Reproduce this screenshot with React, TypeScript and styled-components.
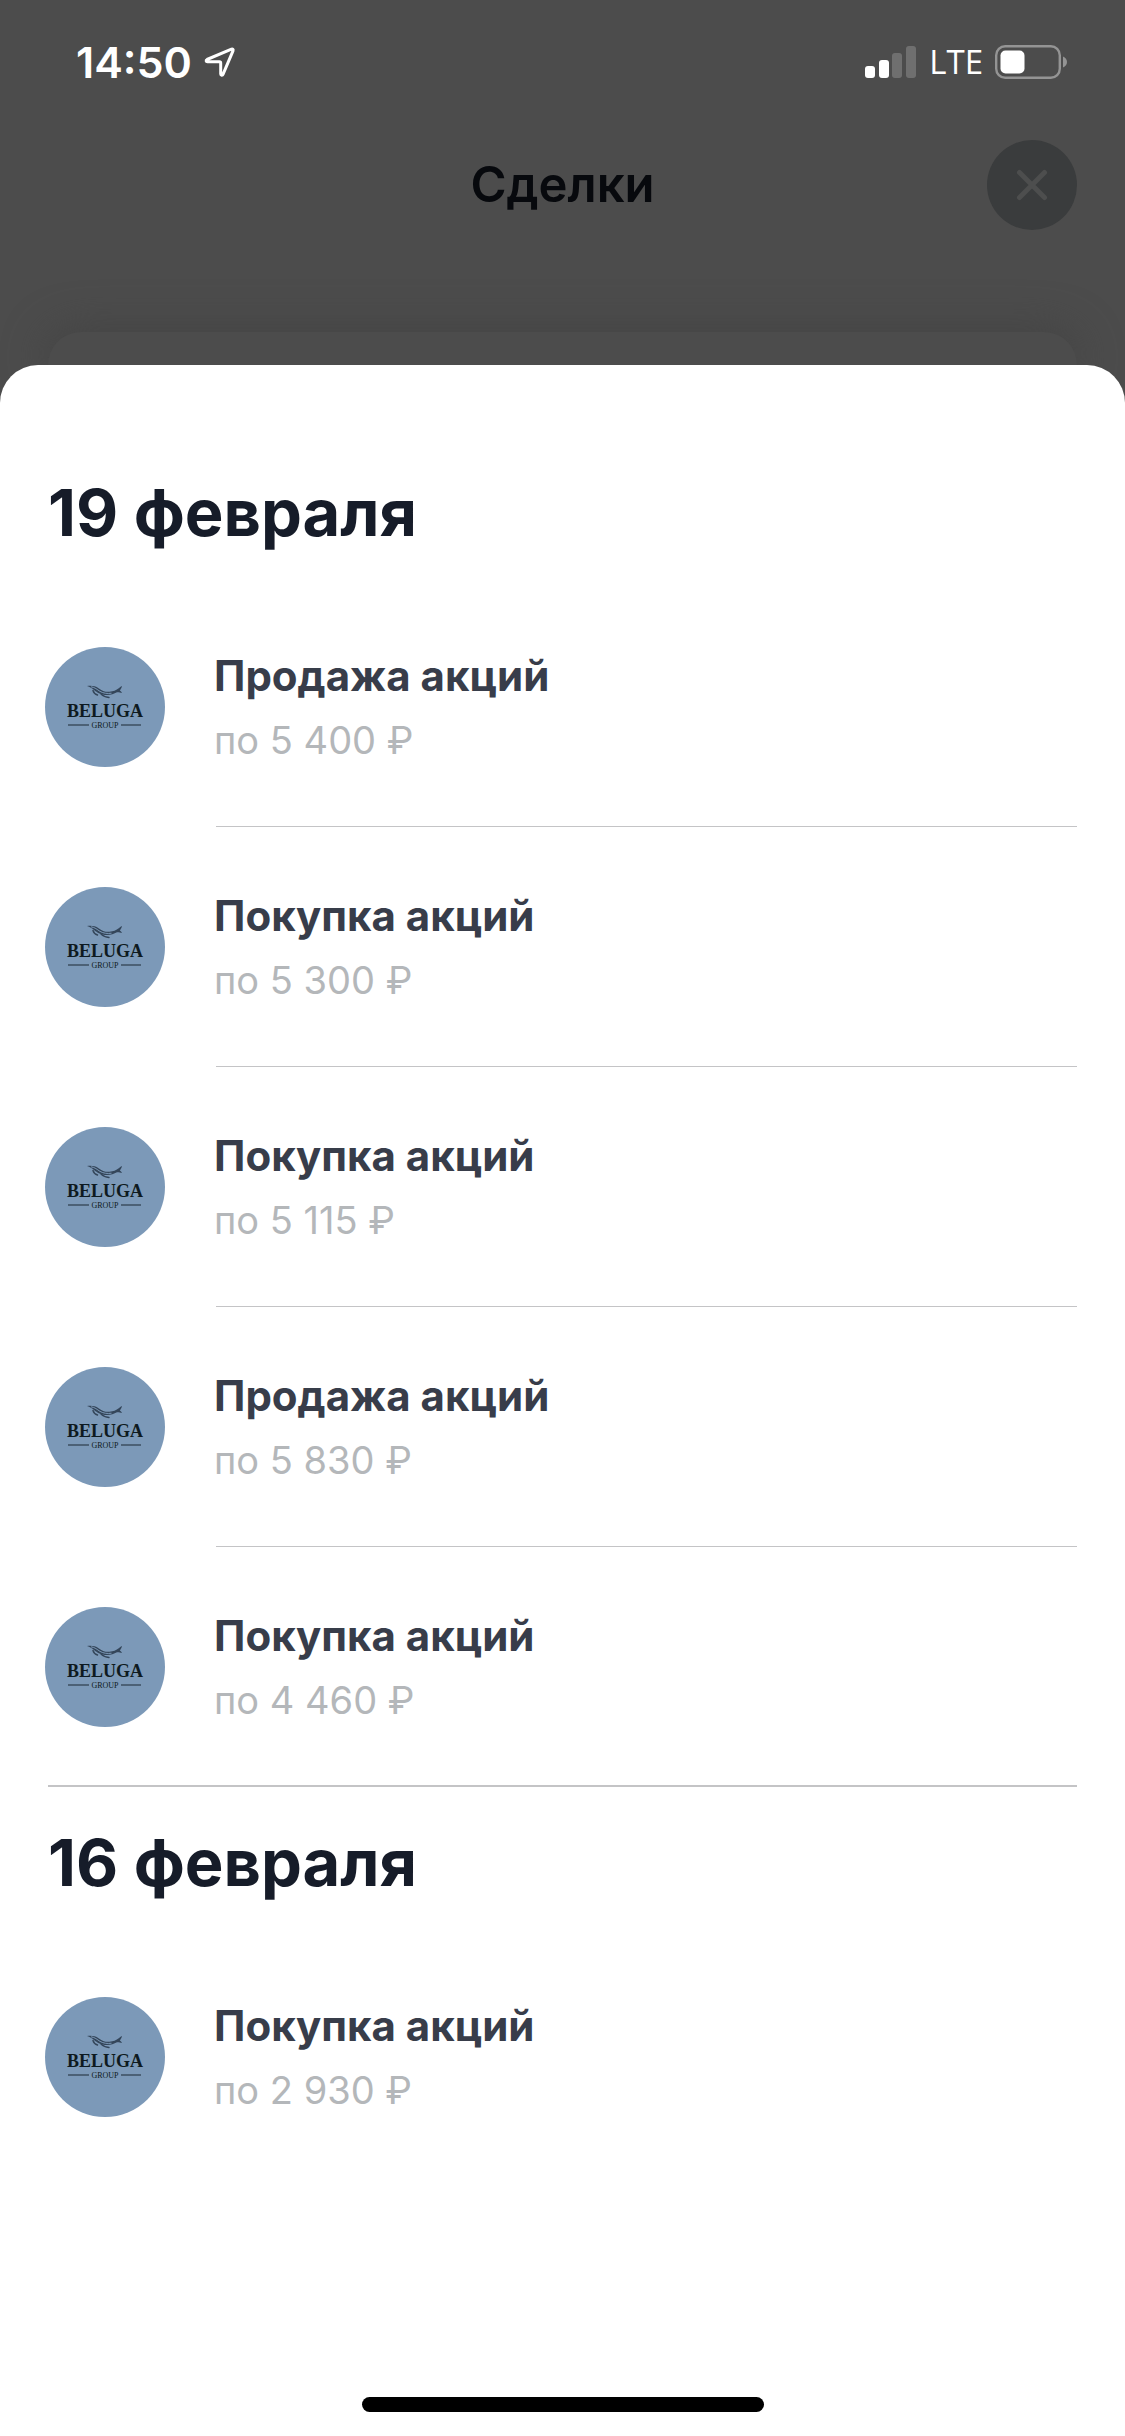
import React from 'react';
import styled, { createGlobalStyle } from 'styled-components';

type Deal = {
  title: string;
  price: string;
};

type DealGroup = {
  date: string;
  deals: Deal[];
};

const groups: DealGroup[] = [
  {
    date: '19 февраля',
    deals: [
      { title: 'Продажа акций', price: 'по 5 400 ₽' },
      { title: 'Покупка акций', price: 'по 5 300 ₽' },
      { title: 'Покупка акций', price: 'по 5 115 ₽' },
      { title: 'Продажа акций', price: 'по 5 830 ₽' },
      { title: 'Покупка акций', price: 'по 4 460 ₽' },
    ],
  },
  {
    date: '16 февраля',
    deals: [{ title: 'Покупка акций', price: 'по 2 930 ₽' }],
  },
];

const LocationIcon: React.FC = () => (
  <svg width="32" height="32" viewBox="0 0 32 32" fill="none" aria-hidden="true">
    <path
      d="M3 13.500 27.500 3.200c1.200-.4 2 .4 1.500 1.600L19 28.400c-.5 1.200-2.300 1-2.300-.3V17c0-.8-.4-1.200-1.200-1.200H3.400c-1.400 0-1.700-1.700-.4-2.300Z"
      stroke="#fff"
      strokeWidth="3"
      strokeLinejoin="round"
    />
  </svg>
);

const SignalIcon: React.FC = () => (
  <svg width="52" height="32" viewBox="0 0 52 32" fill="#fff" aria-hidden="true">
    <rect x="0" y="20" width="10" height="12" rx="3" />
    <rect x="14" y="14" width="10" height="18" rx="3" />
    <rect x="27" y="7" width="10" height="25" rx="3" opacity="0.2" />
    <rect x="41" y="0" width="10" height="32" rx="3" opacity="0.2" />
  </svg>
);

const BatteryIcon: React.FC = () => (
  <svg width="73" height="34" viewBox="0 0 73 34" fill="none" aria-hidden="true">
    <rect x="1.2" y="1.2" width="63.6" height="31.6" rx="9" stroke="#949494" strokeWidth="2.4" />
    <rect x="5.5" y="5.5" width="24" height="23" rx="5" fill="#fff" />
    <path d="M68 11.500c2.500 1 4 3 4 5.500s-1.500 4.500-4 5.500Z" fill="#949494" />
  </svg>
);

const CloseIcon: React.FC = () => (
  <svg width="32" height="32" viewBox="0 0 32 32" fill="none" aria-hidden="true">
    <path d="M3.500 3.500l25 25M28.500 3.500l-25 25" stroke="#4d4e4e" strokeWidth="5" strokeLinecap="round" />
  </svg>
);

const BelugaLogo: React.FC = () => (
  <Logo viewBox="0 0 120 120" role="img" aria-label="Beluga Group">
    <circle cx="60" cy="60" r="60" fill="#7c99b8" />
    <path
      d="M42 39c4.500-.6 8.500 0 11.500 2.200 3.500 2.600 7 4 11 3.600 4-.4 6.500-1.500 8.500-3 1.500-1.200 2.500-2.300 4-2.800-.5 2-1.200 3.300-2.200 4.400 1 .6 1.700 1.300 2.200 2.600-2-.6-3.300-1-5-.8-3 1.600-6 2.800-10 2.800-6 0-10-2.500-13-5-2-1.700-4-3-7-4Z"
      fill="#34465a"
    />
    <path
      d="M46 39.800c4 .6 6 2.700 9 4.600 3.500 2 7.500 2.400 11.500 1.800"
      fill="none"
      stroke="#7c99b8"
      strokeWidth="1"
    />
    <path
      d="M48 43.500c.5 2 1.500 3.500 4.500 4.500M56 47c2 2 4.500 3.200 8 3.500"
      fill="none"
      stroke="#34465a"
      strokeWidth="1.4"
      strokeLinecap="round"
    />
    <text x="60" y="70" textAnchor="middle" fontSize="18" fontWeight="700" fill="#0e1a20">
      BELUGA
    </text>
    <path d="M23 78h21M76 78h20" stroke="#1d2a35" strokeWidth="1.2" />
    <text x="60" y="81" textAnchor="middle" fontSize="8" fill="#0e1a20">
      GROUP
    </text>
  </Logo>
);

const DealItem: React.FC<Deal> = ({ title, price }) => (
  <Item>
    <Row>
      <BelugaLogo />
      <DealText>
        <DealTitle>{title}</DealTitle>
        <DealPrice>{price}</DealPrice>
      </DealText>
    </Row>
  </Item>
);

const App: React.FC = () => {
  return (
    <Screen>
      <GlobalStyle />
      <StatusBar>
        <Clock>
          <Time>14:50</Time>
          <LocationIcon />
        </Clock>
        <Indicators>
          <SignalIcon />
          <Network>LTE</Network>
          <BatteryIcon />
        </Indicators>
      </StatusBar>

      <Header>
        <HeaderTitle>Сделки</HeaderTitle>
        <CloseButton type="button" aria-label="Закрыть">
          <CloseIcon />
        </CloseButton>
      </Header>

      <CardEdge />

      <Sheet>
        {groups.map((group) => (
          <Group key={group.date}>
            <GroupDate>{group.date}</GroupDate>
            <DealList>
              {group.deals.map((deal) => (
                <DealItem key={deal.price} {...deal} />
              ))}
            </DealList>
          </Group>
        ))}
        <HomeIndicator />
      </Sheet>
    </Screen>
  );
};

const GlobalStyle = createGlobalStyle`
  * {
    box-sizing: border-box;
  }

  body {
    margin: 0;
    font-family: Inter, 'Liberation Sans', sans-serif;
    background-color: #4c4c4c;
  }

  h1, h2, p, ul {
    margin: 0;
    padding: 0;
  }
`;

const Screen = styled.div`
  display: flex;
  flex-direction: column;
  min-height: 100vh;
  overflow: hidden;
  background-color: #4c4c4c;
`;

const StatusBar = styled.div`
  display: flex;
  justify-content: space-between;
  align-items: center;
  height: 124px;
  padding: 0 57px 0 76px;
  color: #fff;
`;
const Clock = styled.div`
  display: flex;
  align-items: center;
  gap: 12px;
`;
const Time = styled.span`
  font-size: 43px;
  font-weight: 600;
  line-height: 52px;
`;
const Indicators = styled.div`
  display: flex;
  align-items: center;
  gap: 12px;
`;
const Network = styled.span`
  font-family: 'Open Sans', sans-serif;
  font-size: 33px;
  font-weight: 500;
  line-height: 40px;
`;

const Header = styled.header`
  display: grid;
  grid-template-columns: 90px 1fr 90px;
  align-items: center;
  height: 122px;
  padding: 0 48px;
`;
const HeaderTitle = styled.h1`
  grid-column: 2;
  text-align: center;
  font-size: 49px;
  font-weight: 600;
  line-height: 60px;
  color: #07090d;
`;
const CloseButton = styled.button`
  display: flex;
  justify-content: center;
  align-items: center;
  width: 90px;
  height: 90px;
  padding: 0;
  border: none;
  border-radius: 50%;
  background-color: #3a3c3d;
  cursor: pointer;
`;

const CardEdge = styled.div`
  height: 33px;
  margin: 86px 48px 0;
  border-radius: 33px 33px 0 0;
  background-color: #4c4c4c;
  box-shadow: 0 0 40px 4px #444444;
`;

const Sheet = styled.main`
  display: flex;
  flex: 1;
  flex-direction: column;
  padding: 72px 0 24px;
  border-radius: 38px 38px 0 0;
  background-color: #fff;
`;

const Row = styled.div`
  display: flex;
  flex: 1;
  padding: 60px 48px 0 45px;
  gap: 49px;
`;
const Logo = styled.svg`
  flex: none;
  width: 120px;
  height: 120px;
  font-family: 'Liberation Serif', serif;
`;
const DealText = styled.div`
  display: flex;
  flex-direction: column;
  gap: 12px;
  padding-top: 3px;
`;
const DealTitle = styled.p`
  font-size: 42px;
  font-weight: 700;
  line-height: 52px;
  color: #383d4a;
`;
const DealPrice = styled.p`
  font-size: 38px;
  line-height: 52px;
  color: #b4b7ba;
`;
const Item = styled.li`
  display: flex;
  flex-direction: column;
  min-height: 240px;

  &::after {
    content: '';
    height: 1px;
    margin: 0 48px 0 216px;
    background-color: #c4c4c6;
  }
`;
const DealList = styled.ul`
  list-style: none;
`;
const GroupDate = styled.h2`
  padding: 0 48px;
  margin-bottom: 34px;
  font-size: 65px;
  font-weight: 700;
  line-height: 80px;
  color: #161c29;
`;
const Group = styled.section`
  padding-top: 36px;

  & ${Item}:last-child::after {
    height: 2px;
    margin-left: 48px;
  }

  &:nth-last-child(2) ${Item}:last-child::after {
    background-color: transparent;
  }
`;

const HomeIndicator = styled.div`
  align-self: center;
  width: 402px;
  height: 15px;
  margin-top: auto;
  border-radius: 8px;
  background-color: #000;
`;

export default App;
